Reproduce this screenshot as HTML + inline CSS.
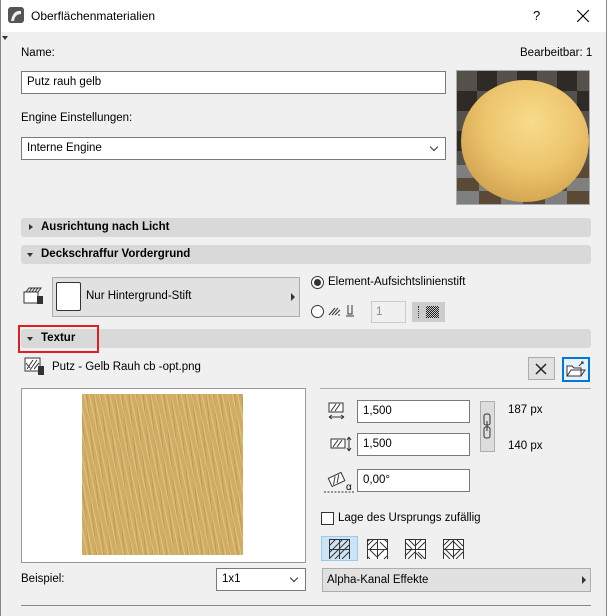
<!DOCTYPE html>
<html><head><meta charset="utf-8"><style>
*{box-sizing:border-box;margin:0;padding:0}
body{width:607px;height:616px;background:#f0f0f0;font-family:"Liberation Sans",sans-serif;font-size:11.5px;color:#000;position:relative;overflow:hidden}
.a{position:absolute}
.inp{position:absolute;background:#fff;border:1px solid #7a7a7a;padding-left:5px;line-height:21px}
.bar{position:absolute;left:21px;width:570px;height:19px;background:#d9d9d9;border-radius:3px;font-weight:bold;line-height:19px;padding-left:20px}
.tri{position:absolute;left:8px;top:6px;width:0;height:0}
.tr{border-top:3.5px solid transparent;border-bottom:3.5px solid transparent;border-left:4px solid #333}
.td{left:6px;top:8px;border-left:3.5px solid transparent;border-right:3.5px solid transparent;border-top:4px solid #333}
.chev{position:absolute;right:8px;top:6px;width:6px;height:6px;border-right:1px solid #333;border-bottom:1px solid #333;transform:rotate(45deg)}
</style></head><body>
<div class="a" style="left:0;top:0;width:1px;height:616px;background:#888"></div>
<div class="a" style="right:0;top:0;width:1px;height:616px;background:#888"></div>
<div class="a" style="left:1px;top:0;width:605px;height:32px;background:#fff"></div>
<svg class="a" style="left:8px;top:7px" width="16" height="16"><rect x="0" y="0" width="16" height="16" rx="3" fill="#555"/><path d="M3 14 Q5 3 13 4 L13 7 Q7 7 6 14Z" fill="#eee"/></svg>
<div class="a" style="left:31px;top:9px;font-size:12px">Oberflächenmaterialien</div>
<div class="a" style="left:533px;top:8px;font-size:13px">?</div>
<svg class="a" style="left:577px;top:10px" width="12" height="12"><path d="M0 0L12 12M12 0L0 12" stroke="#000" stroke-width="1.1"/></svg>
<div class="a" style="left:2px;top:36px;border-left:3px solid transparent;border-right:3px solid transparent;border-top:4px solid #333"></div>

<div class="a" style="left:21px;top:47px">Name:</div>
<div class="a" style="left:520px;top:47px">Bearbeitbar: 1</div>
<div class="inp" style="left:21px;top:71px;width:425px;height:23px">Putz rauh gelb</div>
<div class="a" style="left:21px;top:112px">Engine Einstellungen:</div>
<div class="inp" style="left:21px;top:137px;width:425px;height:23px">Interne Engine<div class="chev"></div></div>
<div class="a" style="left:456px;top:70px;width:134px;height:135px;border:1px solid #aaa;background:
repeating-conic-gradient(#2e2a26 0 25%,#55504a 0 50%) 0 0/40px 40px"></div>
<div class="a" style="left:457px;top:165px;width:132px;height:39px;background:repeating-conic-gradient(#5a4a35 0 25%,#7f7f7f 0 50%) 0 0/44px 26px"></div>
<div class="a" style="left:461px;top:80px;width:128px;height:122px;border-radius:50%;background:radial-gradient(circle at 55% 35%,#f8dc8c 0,#ecc46c 45%,#d2a450 78%,#8a6a30 100%)"></div>

<div class="bar" style="top:218px"><div class="tri tr"></div>Ausrichtung nach Licht</div>
<div class="bar" style="top:245px"><div class="tri td"></div>Deckschraffur Vordergrund</div>

<svg class="a" style="left:23px;top:286px" width="22" height="20"><rect x="1" y="6" width="14" height="11" fill="#fff" stroke="#333"/><path d="M3 6L6 2H18L15 6M6 6l3-4M9 6l3-4M12 6l3-4" stroke="#333" fill="none"/><rect x="14" y="10" width="6" height="8" fill="#333"/></svg>
<div class="a" style="left:52px;top:277px;width:248px;height:40px;background:#e1e1e1;border:1px solid #adadad"></div>
<div class="a" style="left:56px;top:282px;width:25px;height:29px;background:#fff;border:1px solid #333;border-radius:2px"></div>
<div class="a" style="left:86px;top:290px">Nur Hintergrund-Stift</div>
<div class="a" style="left:291px;top:293px;border-top:4px solid transparent;border-bottom:4px solid transparent;border-left:4px solid #333"></div>

<div class="a" style="left:311px;top:276px;width:13px;height:13px;border:1px solid #333;border-radius:50%;background:#fff"><div style="margin:2px;width:7px;height:7px;border-radius:50%;background:#333"></div></div>
<div class="a" style="left:328px;top:276px">Element-Aufsichtslinienstift</div>
<div class="a" style="left:311px;top:305px;width:13px;height:13px;border:1px solid #333;border-radius:50%;background:#fff"></div>
<svg class="a" style="left:328px;top:304px" width="30" height="14"><path d="M1 11L7 4M4 11L10 4M7 11L12 6M10 11h2" stroke="#333"/><path d="M20 1v9h4v-9M18 12h8" stroke="#333" fill="none"/></svg>
<div class="a" style="left:371px;top:301px;width:35px;height:22px;border:1px solid #ccc;background:#f0f0f0;color:#888;line-height:20px;padding-left:4px">1</div>
<div class="a" style="left:412px;top:302px;width:33px;height:20px;background:#ccc"><div style="position:absolute;left:6px;top:4px;height:12px;border-left:1px dotted #333"></div><div style="position:absolute;left:14px;top:4px;width:13px;height:12px;background:repeating-conic-gradient(#222 0 25%,#ccc 0 50%) 0 0/2px 2px"></div></div>

<div class="bar" style="top:329px"><div class="tri td"></div>Textur</div>
<div class="a" style="left:18px;top:325px;width:81px;height:28px;border:2px solid #e02020"></div>

<svg class="a" style="left:24px;top:357px" width="22" height="20"><rect x="1" y="1" width="15" height="13" fill="#fff" stroke="#333"/><path d="M3 12L9 3M6 13L13 3M2 6l4 5M10 12l5-6" stroke="#333"/><rect x="14" y="9" width="6" height="9" fill="#333"/></svg>
<div class="a" style="left:52px;top:361px">Putz - Gelb Rauh cb -opt.png</div>
<div class="a" style="left:528px;top:357px;width:27px;height:23px;background:#e1e1e1;border:1px solid #adadad"></div>
<svg class="a" style="left:535px;top:363px" width="12" height="12"><path d="M1 1L11 11M11 1L1 11" stroke="#222" stroke-width="1.5"/></svg>
<div class="a" style="left:562px;top:357px;width:28px;height:25px;background:#e5f1fb;border:2px solid #0078d7"></div>
<svg class="a" style="left:566px;top:360px" width="20" height="18"><path d="M1 6h5l2 2h7v8H1z M1 16l4-6h14l-4 6" fill="#fff" stroke="#333"/><path d="M13 6l4-4M15 2h2v2" stroke="#333" fill="none"/></svg>

<div class="a" style="left:21px;top:388px;width:285px;height:175px;background:#fff;border:1px solid #999"></div>
<div class="a" style="left:82px;top:394px;width:161px;height:161px;background:repeating-linear-gradient(78deg,rgba(255,240,190,.35) 0 1px,transparent 1px 5px),repeating-linear-gradient(84deg,rgba(140,100,40,.25) 0 1px,transparent 1px 7px),#d1ad64"></div>
<div class="a" style="left:320px;top:388px;width:271px;height:1px;background:#aaa"></div>

<svg class="a" style="left:328px;top:402px" width="18" height="18"><rect x="1" y="1" width="14" height="9" fill="#fff" stroke="#333"/><path d="M3 9L8 2M7 9L12 2" stroke="#333"/><path d="M1 15h15M1 15l3-2M1 15l3 2M16 15l-3-2M16 15l-3 2" stroke="#333" fill="none"/></svg>
<div class="inp" style="left:357px;top:400px;width:113px;height:23px">1,500</div>
<svg class="a" style="left:330px;top:436px" width="22" height="16"><rect x="1" y="3" width="14" height="9" fill="#fff" stroke="#333"/><path d="M3 11L8 4M7 11L12 4" stroke="#333"/><path d="M19 1v14M19 1l-2 3M19 1l2 3M19 15l-2-3M19 15l2-3" stroke="#333" fill="none"/></svg>
<div class="inp" style="left:357px;top:433px;width:113px;height:23px">1,500</div>
<div class="a" style="left:480px;top:401px;width:15px;height:51px;background:#ddd;border:1px solid #adadad"></div>
<svg class="a" style="left:483px;top:413px" width="9" height="26"><rect x="1" y="1" width="6" height="11" rx="2" fill="none" stroke="#333"/><rect x="1" y="14" width="6" height="11" rx="2" fill="none" stroke="#333"/><path d="M4 8v10" stroke="#333"/></svg>
<div class="a" style="left:508px;top:404px">187 px</div>
<div class="a" style="left:508px;top:440px">140 px</div>
<svg class="a" style="left:322px;top:470px" width="34" height="24"><g transform="rotate(-25 17 10)"><rect x="8" y="4" width="14" height="9" fill="#fff" stroke="#333"/><path d="M10 12L15 5M14 12L19 5" stroke="#333"/></g><path d="M2 22h30" stroke="#333" stroke-dasharray="2 1.5"/><text x="24" y="20" font-size="10" font-family="Liberation Sans">α</text></svg>
<div class="inp" style="left:357px;top:469px;width:113px;height:23px">0,00°</div>

<div class="a" style="left:321px;top:512px;width:13px;height:13px;border:1px solid #333;background:#fff"></div>
<div class="a" style="left:338px;top:512px">Lage des Ursprungs zufällig</div>

<div class="a" style="left:321px;top:536px;width:37px;height:25px;background:#cce4f7;border:1px solid #99c9ef"></div>
<svg class="a" style="left:329px;top:539px" width="140" height="20">
<g stroke="#333" fill="none"><rect x="0.5" y="0.5" width="20" height="20" fill="#cfe3f5"/><path d="M10.5 0v20M0 10.5h20M0 7l7-7M0 14l14-14M6 20l14-14M13 20l7-7M0 20l20-20" stroke-width="1"/></g>
<g transform="translate(38 0)" stroke="#333" fill="none"><rect x="0.5" y="0.5" width="20" height="20" fill="#fff"/><path d="M10.5 0v20M0 10.5h20M0 7l7-7M0 3l3-3M3 10l7-7M13 3l7 7M17 0l3 3M0 17l3 3M3 11l7 7M20 17l-3 3M17 11l-7 7"/></g>
<g transform="translate(76 0)" stroke="#333" fill="none"><rect x="0.5" y="0.5" width="20" height="20" fill="#fff"/><path d="M10.5 0v20M0 10.5h20M0 3l7 7M3 0l7 7M10 7l7-7M13 10l7-7M0 17l7-7M3 20l7-7M13 13l7 7M10 13l7 7"/></g>
<g transform="translate(114 0)" stroke="#333" fill="none"><rect x="0.5" y="0.5" width="20" height="20" fill="#fff"/><path d="M10.5 0v20M0 10.5h20M10 2l8 8-8 8-8-8zM0 7l7-7M13 0l7 7M0 13l7 7M13 20l7-7"/></g>
</svg>

<div class="a" style="left:21px;top:573px">Beispiel:</div>
<div class="inp" style="left:216px;top:568px;width:90px;height:23px">1x1<div class="chev"></div></div>
<div class="a" style="left:322px;top:568px;width:269px;height:24px;background:#e1e1e1;border:1px solid #adadad;line-height:22px;padding-left:4px">Alpha-Kanal Effekte<div style="position:absolute;right:4px;top:7px;border-top:4px solid transparent;border-bottom:4px solid transparent;border-left:4px solid #333"></div></div>
<div class="a" style="left:21px;top:605px;width:570px;height:1px;background:#888"></div>
</body></html>
